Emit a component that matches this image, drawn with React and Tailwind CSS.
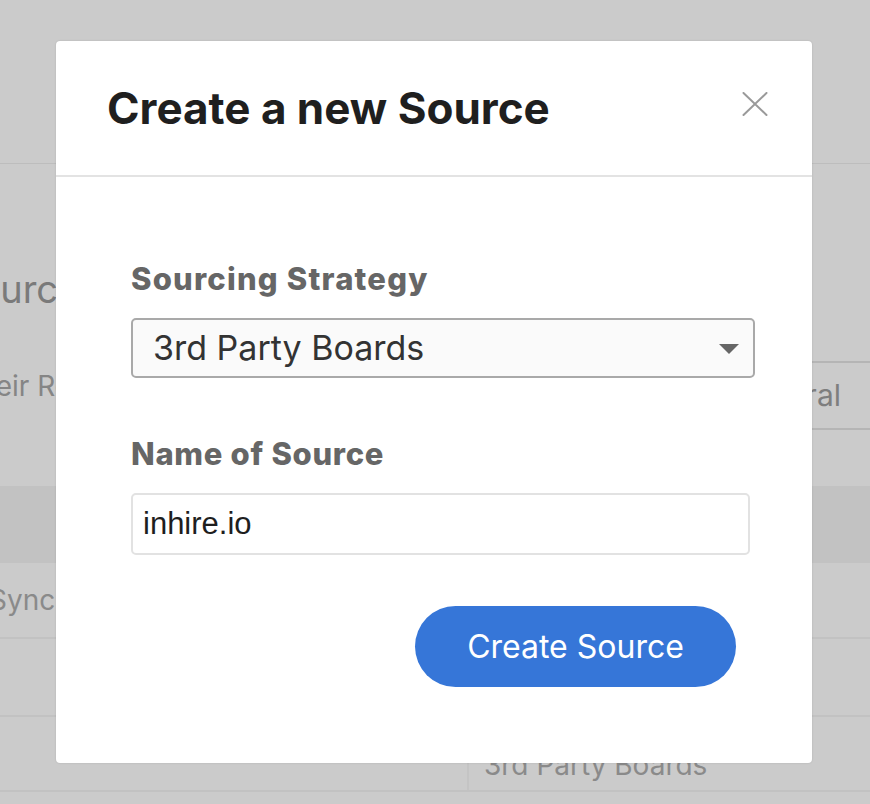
import { useState } from 'react'

const SANS = { fontFamily: 'Inter, "Noto Sans", sans-serif' }

function CloseIcon() {
  return (
    <svg width="26" height="24" viewBox="0 0 26 24" fill="none" stroke="#9a9a9a" strokeWidth="2" strokeLinecap="round">
      <path d="M1.5 1 L24.5 23 M24.5 1 L1.5 23" />
    </svg>
  )
}

// page behind the overlay (dimmed)
function Backdrop() {
  return (
    <div className="w-full h-full bg-[#cbcbcb] text-[#7a7a7a]" style={SANS}>
      <div className="h-[164px] border-b border-[#bdbdbd]" />
      <div className="h-[322px] flex justify-between">
        <div className="pt-[106px]">
          <div className="text-[38px] leading-none -ml-[47px]">Sources</div>
          <div className="text-[28px] leading-none mt-[64px] -ml-[30px] text-[#858585]">their Referrals</div>
        </div>
        <div className="mt-[197px] w-[400px] -mr-[130px] h-[69px] border-y-2 border-[#b5b5b5] flex items-center justify-end pr-[159px] text-[30px] text-[#7e7e7e]">
          Referral
        </div>
      </div>
      <div className="h-[77px] bg-[#c2c2c2]" />
      <div className="h-[76px] border-b-2 border-[#c2c2c2] flex items-center text-[28px] text-[#8a8a8a]">
        <span className="-ml-[11px]">Sync</span>
      </div>
      <div className="h-[78px] border-b-2 border-[#c2c2c2]" />
      <div className="h-[75px] border-b-2 border-[#c2c2c2] flex">
        <div className="w-[469px] border-r-2 border-[#c4c4c4]" />
        <div className="pl-[15px] pt-[27px] text-[28px] text-[#8a8a8a]">3rd Party Boards</div>
      </div>
    </div>
  )
}

export default function App() {
  const [strategy, setStrategy] = useState('3rd Party Boards')
  const [name, setName] = useState('inhire.io')

  return (
    <div className="relative w-[870px] h-[804px] overflow-hidden">
      <Backdrop />

      {/* Modal */}
      <div className="absolute left-[56px] top-[41px] w-[756px] bg-white rounded-[4px] shadow-[0_0_2px_rgba(0,0,0,0.15)]" style={SANS}>
        <div className="h-[136px] flex items-start justify-between pl-[51px] pr-[44px] pt-[45px] border-b-2 border-[#e3e3e3]">
          <h2 className="text-[44px] leading-[44px] font-bold text-[#1f1f1f]">Create a new Source</h2>
          <button className="mt-[6px]"><CloseIcon /></button>
        </div>

        <div className="pl-[75px] pt-[87px] pb-[76px]">
          <label className="block text-[31px] leading-[30px] font-extrabold text-[#666666] tracking-[1.2px]">Sourcing Strategy</label>
          <div className="relative mt-[24px] w-[624px] h-[60px]">
            <select
              value={strategy}
              onChange={e => setStrategy(e.target.value)}
              className="appearance-none w-full h-full rounded-[5px] border-2 border-[#a9a9a9] bg-[#fafafa] pl-[20px] pb-[2px] text-[34px] text-[#333333] outline-none"
              style={SANS}
            >
              <option>3rd Party Boards</option>
              <option>Referral</option>
              <option>Sync</option>
            </select>
            <svg className="absolute right-[16px] top-[26px] pointer-events-none" width="20" height="10" viewBox="0 0 20 10">
              <path d="M0 0 H20 L10 10 Z" fill="#666666" />
            </svg>
          </div>

          <label className="block mt-[61px] text-[31px] leading-[30px] font-extrabold text-[#666666] tracking-[0.7px]">Name of Source</label>
          <input
            value={name}
            onChange={e => setName(e.target.value)}
            className="block mt-[24px] w-[619px] h-[62px] rounded-[5px] border-2 border-[#e2e2e2] bg-white pl-[10px] text-[31px] text-[#1e1e1e] outline-none"
            style={{ fontFamily: '"Liberation Sans", Arial, sans-serif' }}
          />

          <div className="mt-[51px] w-[605px] flex justify-end">
            <button className="w-[321px] h-[81px] rounded-full bg-[#3676d8] text-white text-[32px]">
              Create Source
            </button>
          </div>
        </div>
      </div>
    </div>
  )
}
